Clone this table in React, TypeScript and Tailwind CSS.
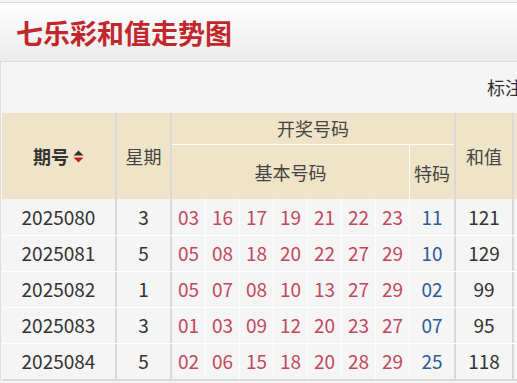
import React from 'react';

const rows = [
  { qh: '2025080', xq: 3, nums: ['03', '16', '17', '19', '21', '22', '23'], tm: '11', hz: 121 },
  { qh: '2025081', xq: 5, nums: ['05', '08', '18', '20', '22', '27', '29'], tm: '10', hz: 129 },
  { qh: '2025082', xq: 1, nums: ['05', '07', '08', '10', '13', '27', '29'], tm: '02', hz: 99 },
  { qh: '2025083', xq: 3, nums: ['01', '03', '09', '12', '20', '23', '27'], tm: '07', hz: 95 },
  { qh: '2025084', xq: 5, nums: ['02', '06', '15', '18', '20', '28', '29'], tm: '25', hz: 118 },
];

const SortIcon = () => (
  <svg width="11" height="13" viewBox="0 0 11 13" className="ml-[4px]">
    <path d="M5.5 0.5 L10.5 5.5 L0.5 5.5 Z" fill="#333" />
    <path d="M0.5 7.5 L10.5 7.5 L5.5 12.5 Z" fill="#d0161b" />
  </svg>
);

export default function App() {
  return (
    <div
      className="w-[517px] h-[383px] overflow-hidden bg-[#f5f5f5] pt-[2px]"
      style={{ fontFamily: '"Microsoft YaHei", "Noto Sans CJK SC", "Noto Sans", sans-serif' }}
    >
      {/* title bar */}
      <div className="h-[60px] border-t border-b border-[#dadada] bg-gradient-to-b from-white to-[#ebebeb] flex items-center pl-[16px]">
        <h1 className="text-[27px] font-bold text-[#c1272d] leading-none">七乐彩和值走势图</h1>
      </div>

      <div className="border-l border-[#dedede] pl-[1px]">
        {/* toolbar */}
        <div className="h-[51px] flex items-center pl-[485px] whitespace-nowrap overflow-hidden">
          <span className="text-[18px] text-[#333]">标注</span>
        </div>

        {/* table header */}
        <div className="flex h-[86px] text-[18px] text-[#444] whitespace-nowrap">
          <div className="w-[113px] shrink-0 bg-[#efe4c7] flex items-center justify-center font-bold text-[#333]">
            期号<SortIcon />
          </div>
          <div className="w-[2px] shrink-0 bg-[#d9d9d9]" />
          <div className="w-[53px] shrink-0 bg-[#efe4c7] flex items-center justify-center">星期</div>
          <div className="w-[2px] shrink-0 bg-[#d9d9d9]" />
          <div className="w-[282px] shrink-0 flex flex-col">
            <div className="h-[32px] bg-[#efe4c7] border-b border-white flex items-center justify-center">开奖号码</div>
            <div className="flex-1 flex">
              <div className="w-[238px] bg-[#efe4c7] border-r border-white flex items-center justify-center">基本号码</div>
              <div className="flex-1 bg-[#efe4c7] flex items-center justify-center pt-[2px]">特码</div>
            </div>
          </div>
          <div className="w-[2px] shrink-0 bg-[#d9d9d9]" />
          <div className="w-[56px] shrink-0 bg-[#efe4c7] flex items-center justify-center">和值</div>
          <div className="w-[2px] shrink-0 bg-[#d9d9d9]" />
          <div className="flex-1 bg-[#efe4c7]" />
        </div>

        {/* table body */}
        <div className="text-[19px] text-[#333] border-b-2 border-[#d9d9d9]">
          {rows.map((r) => (
            <div key={r.qh} className="flex h-[36px] border-t border-white first:border-t-0">
              <div className="w-[113px] shrink-0 flex items-center justify-center">{r.qh}</div>
              <div className="w-[2px] shrink-0 bg-[#d9d9d9]" />
              <div className="w-[53px] shrink-0 flex items-center justify-center">{r.xq}</div>
              <div className="w-[2px] shrink-0 bg-[#d9d9d9]" />
              <div className="w-[238px] shrink-0 flex">
                {r.nums.map((n, i) => (
                  <div key={i} className="w-[34px] border-r border-white flex items-center justify-center text-[#c2485c]">
                    {n}
                  </div>
                ))}
              </div>
              <div className="w-[44px] shrink-0 flex items-center justify-center text-[#2d5b98]">{r.tm}</div>
              <div className="w-[2px] shrink-0 bg-[#d9d9d9]" />
              <div className="w-[56px] shrink-0 flex items-center justify-center">{r.hz}</div>
              <div className="w-[2px] shrink-0 bg-[#d9d9d9]" />
              <div className="flex-1" />
            </div>
          ))}
        </div>
      </div>
    </div>
  );
}
